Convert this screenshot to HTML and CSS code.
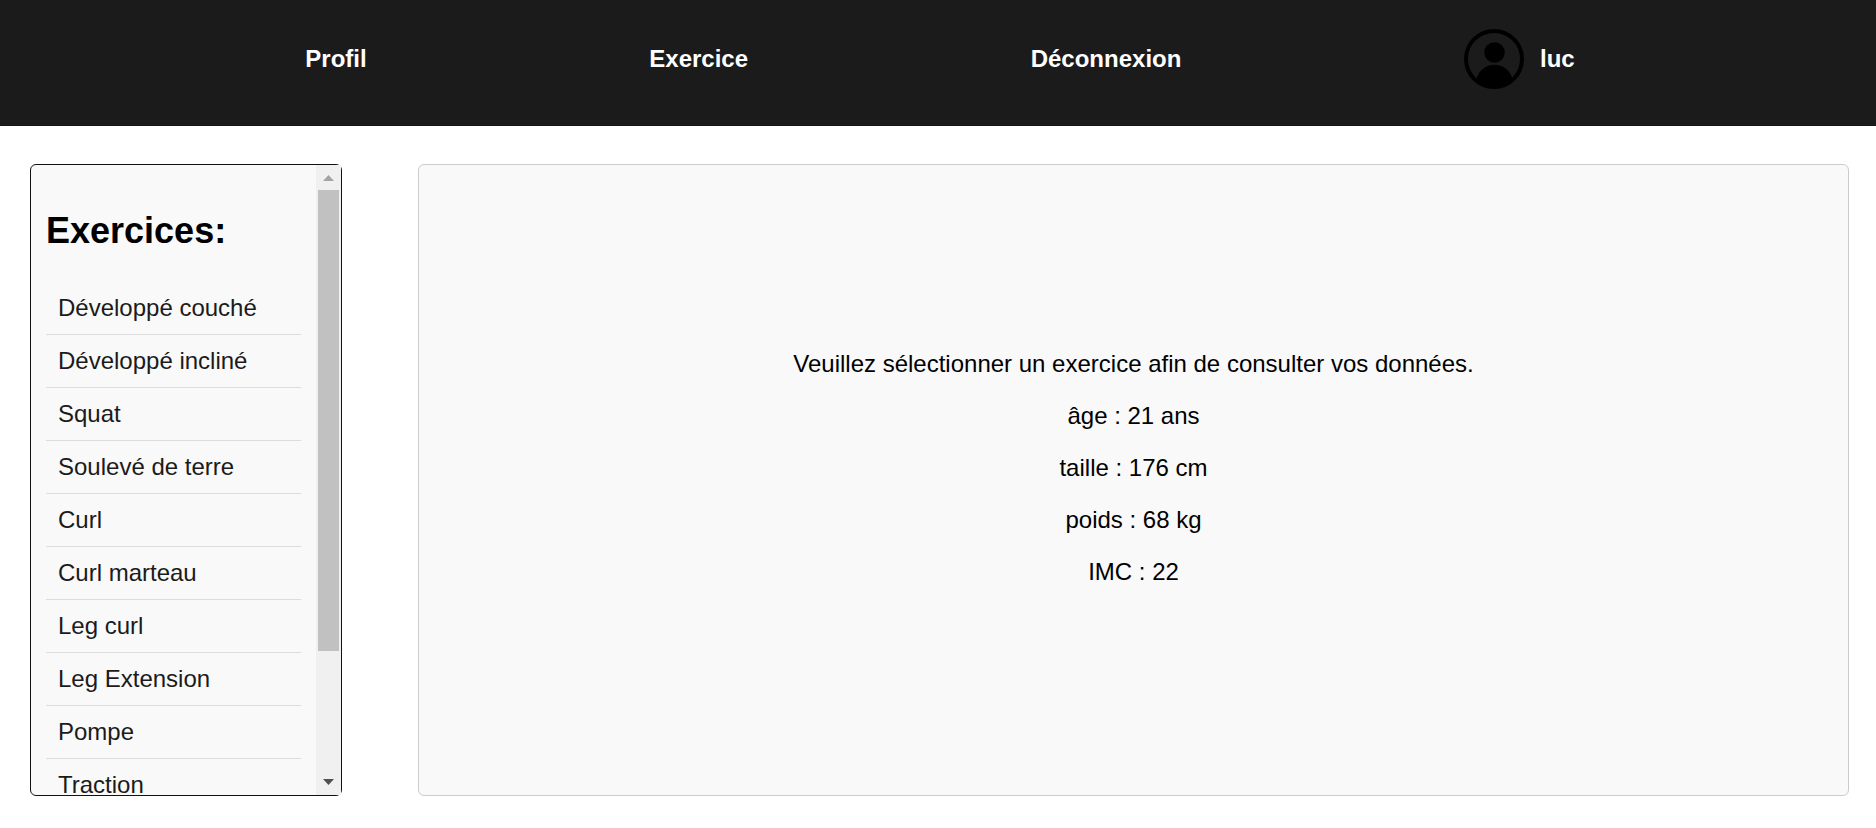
FILE: index.html
```
<!DOCTYPE html>
<html lang="fr">
<head>
<meta charset="utf-8">
<title>Exercices</title>
<link rel="stylesheet" href="styles.css">
</head>
<body>
<header class="site-header">
  <nav class="nav">
    <a href="#profil">Profil</a>
    <a href="#exercice">Exercice</a>
    <a href="#deconnexion">Déconnexion</a>
    <a class="user" href="#compte">
      <svg class="avatar" viewBox="0 0 60 60" aria-hidden="true">
        <circle cx="30" cy="30" r="28" fill="none" stroke="#000" stroke-width="4"/>
        <circle cx="30.500" cy="23.500" r="10.300"/>
        <path d="M12.500 50A18.500 18.500 0 0 1 48.500 50C44 55 37 58.500 30 58.500C23 58.500 17 55.500 12.500 50Z"/>
      </svg>
      <span>luc</span>
    </a>
  </nav>
</header>
<div class="layout">
  <aside class="sidebar">
    <div class="sidebar-content">
      <h2>Exercices:</h2>
      <ul class="exercise-list">
        <li><a href="#developpe-couche">Développé couché</a></li>
        <li><a href="#developpe-incline">Développé incliné</a></li>
        <li><a href="#squat">Squat</a></li>
        <li><a href="#souleve-de-terre">Soulevé de terre</a></li>
        <li><a href="#curl">Curl</a></li>
        <li><a href="#curl-marteau">Curl marteau</a></li>
        <li><a href="#leg-curl">Leg curl</a></li>
        <li><a href="#leg-extension">Leg Extension</a></li>
        <li><a href="#pompe">Pompe</a></li>
        <li><a href="#traction">Traction</a></li>
      </ul>
    </div>
    <div class="scrollbar" aria-hidden="true">
      <svg class="arrow arrow-up" viewBox="0 0 25 25"><path d="M7 16L12.500 10L18 16Z"/></svg>
      <div class="track"><div class="thumb"></div></div>
      <svg class="arrow arrow-down" viewBox="0 0 25 25"><path d="M7 9L12.500 15L18 9Z"/></svg>
    </div>
  </aside>
  <main class="panel">
    <p>Veuillez sélectionner un exercice afin de consulter vos données.</p>
    <p>âge : 21 ans</p>
    <p>taille : 176 cm</p>
    <p>poids : 68 kg</p>
    <p>IMC : 22</p>
  </main>
</div>
</body>
</html>
```

FILE: styles.css
```
* {
  box-sizing: border-box;
}

body {
  margin: 0;
  height: 100vh;
  display: flex;
  flex-direction: column;
  background: #fff;
  color: #000;
  font-family: "Liberation Sans", Arial, sans-serif;
  font-size: 24px;
  line-height: 28px;
}

a {
  color: inherit;
  text-decoration: none;
}

.site-header {
  flex: none;
  padding: 29px 160px 36px 164px;
  background: #1b1b1b;
  border-bottom: 1px solid #161616;
}

.nav {
  display: flex;
  justify-content: space-around;
  align-items: center;
  color: #fff;
  font-weight: bold;
}

.user {
  display: flex;
  align-items: center;
  gap: 16px;
}

.avatar {
  width: 60px;
  height: 60px;
}

.layout {
  flex: 1;
  min-height: 0;
  display: flex;
  gap: 76px;
  padding: 38px 27px 32px 30px;
}

.sidebar {
  flex: 0 0 312px;
  display: flex;
  background: #f9f9f9;
  border: 1px solid #111;
  border-radius: 6px;
}

.sidebar-content {
  flex: 1;
  padding: 15px;
  overflow-y: auto;
  scrollbar-width: none;
}

.sidebar h2 {
  margin: 30px 0;
  font-size: 36px;
  line-height: 42px;
}

.exercise-list {
  margin: 0;
  padding: 0;
  list-style: none;
}

.exercise-list li {
  border-bottom: 1px solid #ddd;
}

.exercise-list a {
  display: block;
  padding: 12px;
  color: #1b1b1b;
}

.scrollbar {
  flex: none;
  width: 25px;
  display: flex;
  flex-direction: column;
  background: #f0f0f0;
}

.arrow {
  flex: none;
  width: 25px;
  height: 25px;
}

.arrow-up {
  fill: #a3a3a3;
}

.arrow-down {
  fill: #505050;
}

.track {
  flex: 1;
  padding: 0 2px;
}

.thumb {
  height: 79.5%;
  background: #c1c1c1;
}

.panel {
  flex: 1;
  display: flex;
  flex-direction: column;
  justify-content: center;
  align-items: center;
  gap: 24px;
  padding: 0 24px 24px;
  background: #f9f9f9;
  border: 1px solid #ccc;
  border-radius: 6px;
  text-align: center;
}

.panel p {
  margin: 0;
}
```
